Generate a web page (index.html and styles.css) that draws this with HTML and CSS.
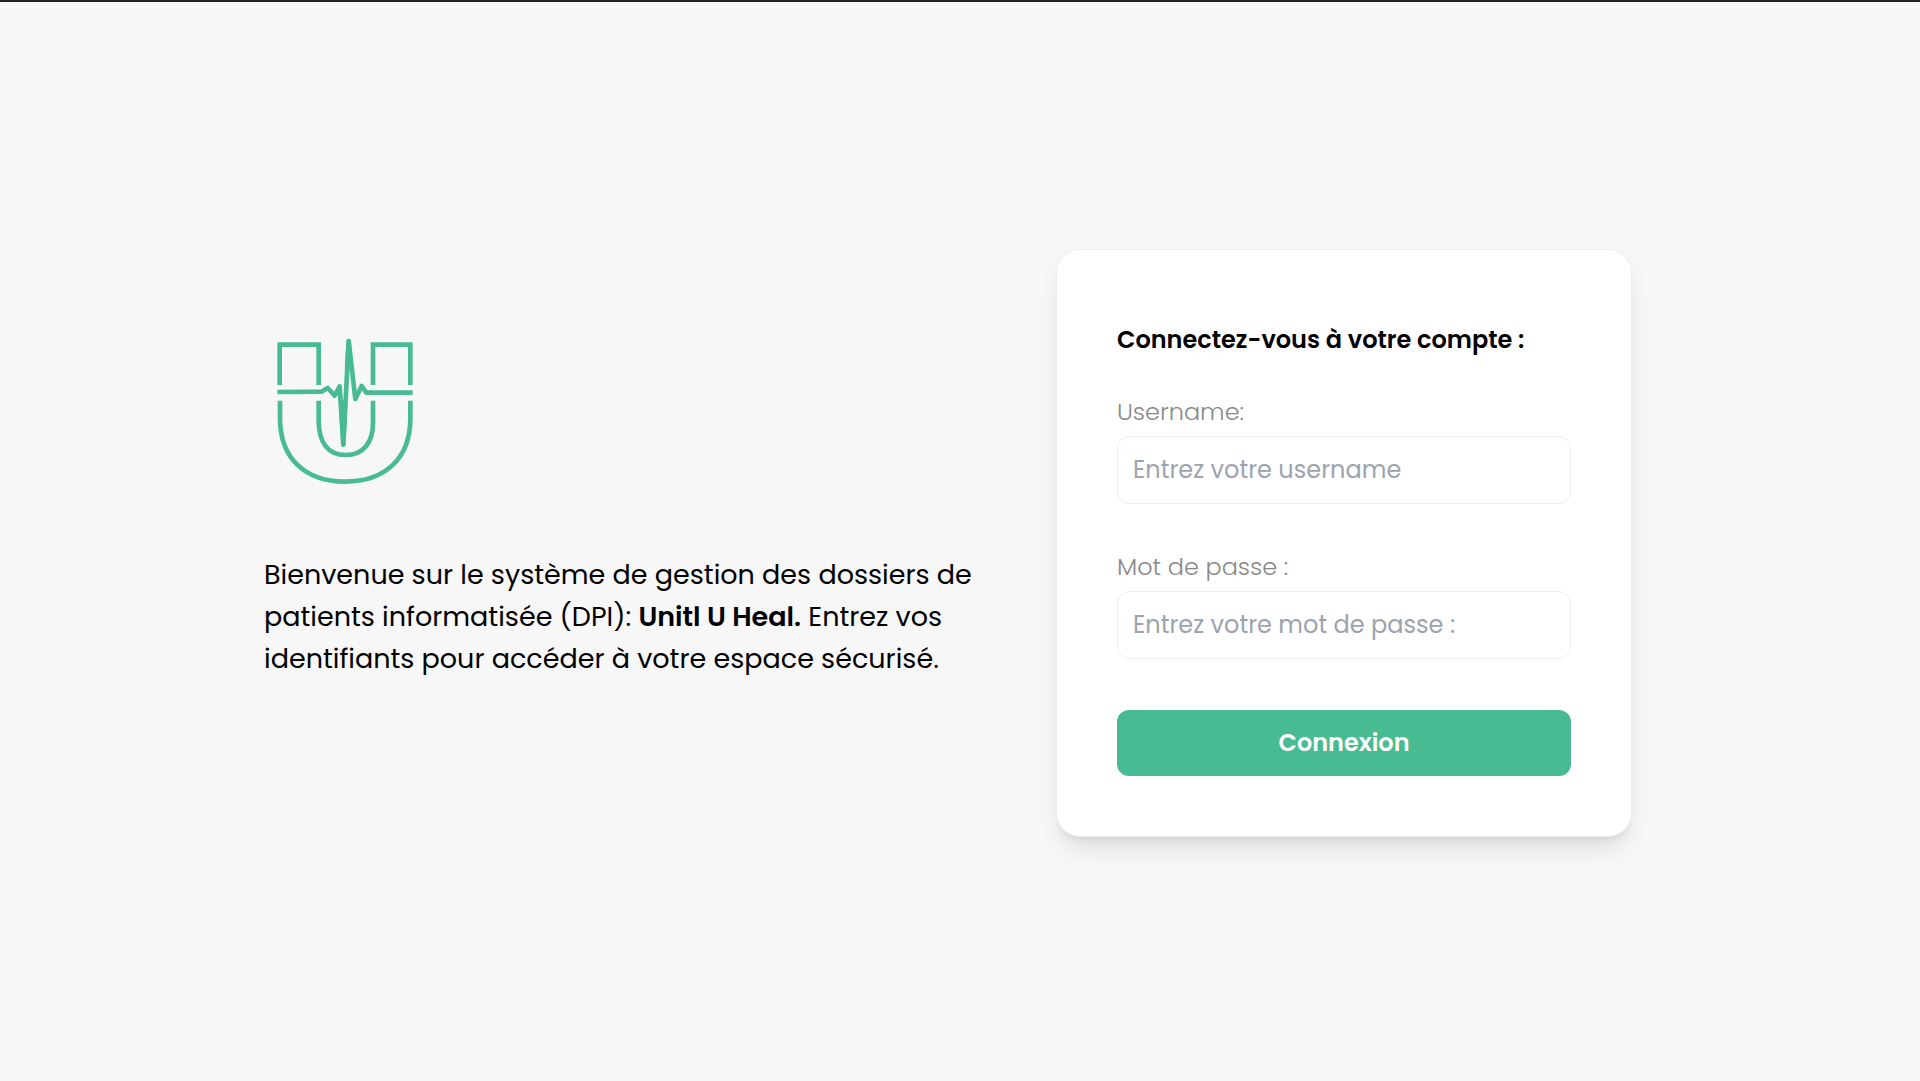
FILE: index.html
```html
<!DOCTYPE html>
<html lang="fr">
<head>
  <meta charset="utf-8">
  <meta name="viewport" content="width=device-width, initial-scale=1">
  <title>Connexion</title>
  <link rel="stylesheet" href="styles.css">
</head>
<body>
  <main class="login">
    <section class="intro">
      <svg class="logo" viewBox="12 0 498 510" role="img" aria-label="Unitl U Heal">
        <g fill="none" stroke="#48bb92" stroke-width="14">
          <path d="M59 177V56H176V177M339 177V56H451V177"/>
          <path d="M60 224V278C61 398 136 467 255 467S451 398 451 278V224"/>
          <path d="M176 224V282C176 348 203 387 257 387S339 348 339 292V224"/>
          <path stroke-linejoin="round" d="M52 198L184 197L203 186L224 209L239 181L250 356L266 45L286 219L305 180L319 200H458"/>
        </g>
        <g fill="#48bb92" stroke="#48bb92" stroke-width="13" stroke-linejoin="round">
          <path d="M261 124L266 45L273 124Z"/>
          <path d="M243 230H256L250 356Z"/>
        </g>
      </svg>
      <p class="welcome">Bienvenue sur le système de gestion des dossiers de<br>patients informatisée (DPI): <strong>Unitl U Heal.</strong> Entrez vos<br>identifiants pour accéder à votre espace sécurisé.</p>
    </section>
    <form class="card">
      <h1 class="title">Connectez-vous à votre compte :</h1>
      <div class="field">
        <label class="label" for="username">Username:</label>
        <input class="input" id="username" type="text" placeholder="Entrez votre username">
      </div>
      <div class="field">
        <label class="label" for="password">Mot de passe :</label>
        <input class="input" id="password" type="password" placeholder="Entrez votre mot de passe :">
      </div>
      <button class="submit" type="submit">Connexion</button>
    </form>
  </main>
</body>
</html>
```
FILE: styles.css
```css
* {
  box-sizing: border-box;
}

body {
  margin: 0;
  background: #f7f7f7;
  color: #000;
  font-family: Poppins, Inter, "Open Sans", sans-serif;
}

.login {
  display: grid;
  grid-template-columns: 11fr 33fr 24fr 12fr;
  align-items: center;
  min-height: 100vh;
  padding-top: 2px;
  border-top: 2px solid #252324;
}

.intro {
  grid-column: 2;
  padding-bottom: 80px;
}

.logo {
  display: block;
  width: 166px;
  height: 170px;
  margin-bottom: 58px;
}

.welcome {
  margin: 0;
  font-size: 27px;
  line-height: 42px;
}

.welcome strong {
  font-weight: 600;
}

.card {
  grid-column: 3;
  padding: 72px 60px 60px;
  background: #fff;
  border: 1px solid #eee;
  border-radius: 24px;
  box-shadow: 0 15px 22px -4px rgb(0 0 0 / 10%), 0 6px 9px -6px rgb(0 0 0 / 10%);
}

.title {
  margin: 0 0 36px;
  font-size: 24px;
  font-weight: 600;
  line-height: 36px;
}

.field {
  margin-bottom: 45px;
}

.field:last-of-type {
  margin-bottom: 51px;
}

.label {
  display: block;
  margin-bottom: 6px;
  color: #888;
  font-size: 24px;
  font-weight: 300;
  line-height: 36px;
}

.input {
  display: block;
  width: 100%;
  height: 68px;
  padding: 0 15px;
  background: #fff;
  border: 1px solid #eee;
  border-radius: 12px;
  font: inherit;
  font-size: 24px;
}

.input::placeholder {
  color: #9ca3af;
  opacity: 1;
}

.submit {
  display: block;
  width: 100%;
  height: 66px;
  border: 0;
  border-radius: 12px;
  background: #48bb92;
  color: #fff;
  font: inherit;
  font-size: 24px;
  font-weight: 600;
}
```
